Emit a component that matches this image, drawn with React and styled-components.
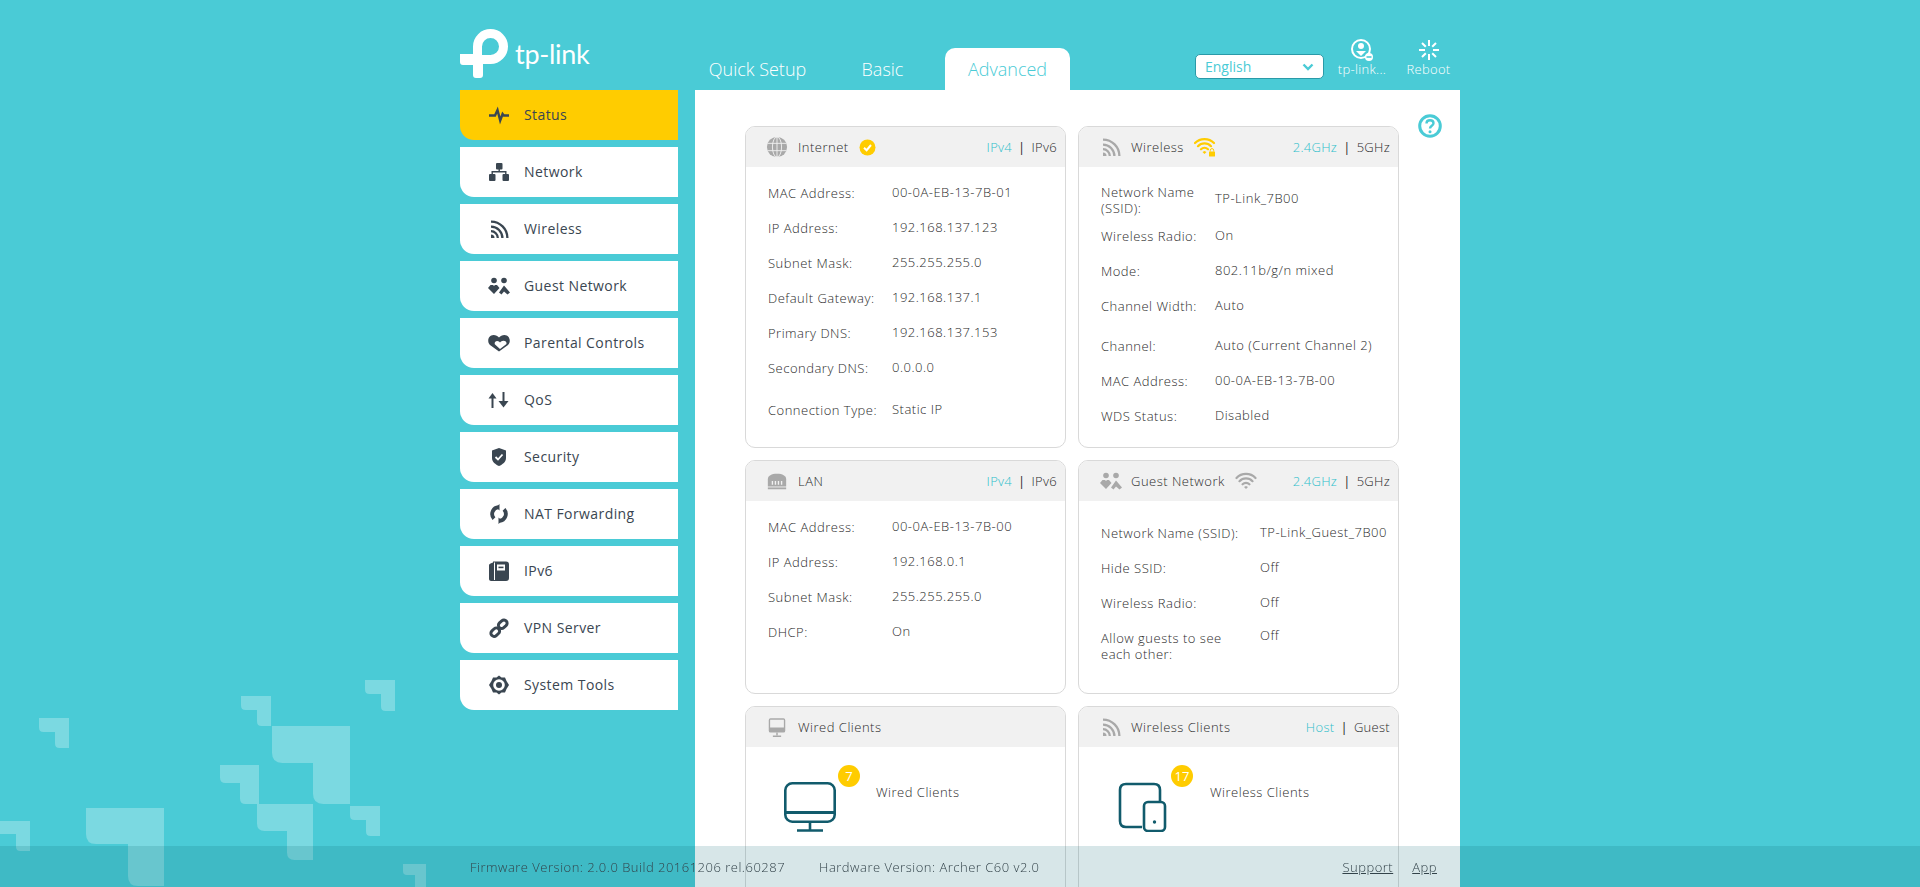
import React from "react";
import styled, {createGlobalStyle} from "styled-components";

const TEAL = "#4acbd6";
const DARK = "#3a4651";
const GRAY = "#a9a9a9";
const YELLOW = "#ffcc00";
const DEEP = "#115b6c";

const Global = createGlobalStyle`
  html, body { margin: 0; height: 100%; overflow: hidden; background: ${TEAL}; }
  body { font-family: "Open Sans", "Liberation Sans", sans-serif; font-size: 13px; font-weight: 300; letter-spacing: 0.5px; color: #2b2b2b; }
  * { box-sizing: border-box; }
`;

const Decor = styled.svg`
  position: fixed;
  left: 0;
  bottom: 0;
  width: 460px;
  height: 210px;
  fill: rgba(255, 255, 255, 0.27);
`;

const Page = styled.div`
  position: relative;
  width: 1000px;
  height: 100vh;
  margin: 0 auto;
  display: flex;
  flex-direction: column;
  overflow: hidden;
`;

const Header = styled.header`
  flex: none;
  height: 90px;
  display: flex;
  align-items: flex-end;
`;

const Logo = styled.div`
  width: 235px;
  height: 61px;
  display: flex;
  align-items: flex-start;
  color: #fff;
`;

const LogoText = styled.span`
  font-family: Lato, "Open Sans", sans-serif;
  font-size: 27px;
  font-weight: 400;
  line-height: 30px;
  margin: 10px 0 0 5px;
  letter-spacing: -0.3px;
`;

const Tabs = styled.nav`
  display: flex;
`;

const Tab = styled.div`
  width: 125px;
  height: 42px;
  line-height: 42px;
  text-align: center;
  font-size: 18px;
  font-weight: 300;
  letter-spacing: 0;
  color: ${p => (p.$active ? TEAL : "#fff")};
  background: ${p => (p.$active ? "#fff" : "transparent")};
  border-radius: 10px 10px 0 0;
`;

const Tools = styled.div`
  margin-left: auto;
  height: 90px;
  display: flex;
  position: relative;
`;

const LangSelect = styled.div`
  width: 129px;
  height: 25px;
  margin: 54px 13px 0 0;
  padding: 0 9px;
  display: flex;
  align-items: center;
  justify-content: space-between;
  background: #fff;
  border: 1px solid #2a9aa8;
  border-radius: 5px;
  color: ${TEAL};
  font-size: 14px;
  font-weight: 400;
  letter-spacing: 0;
`;

const ToolButton = styled.div`
  width: ${p => p.$w}px;
  margin-left: ${p => p.$ml || 0}px;
  padding-top: 38px;
  display: flex;
  flex-direction: column;
  align-items: center;
  color: #fff;
  font-size: 13px;
  font-weight: 300;
  letter-spacing: 0.3px;
  line-height: 16px;
  white-space: nowrap;
  svg { margin-bottom: -1px; }
`;

const Body = styled.div`
  flex: 1;
  min-height: 0;
  display: flex;
  gap: 17px;
`;

const Sidebar = styled.aside`
  flex: none;
  width: 218px;
  display: flex;
  flex-direction: column;
  gap: 7px;
`;

const MenuItem = styled.div`
  height: 50px;
  padding: 0 0 1px 27px;
  display: flex;
  align-items: center;
  gap: 13px;
  font-size: 14px;
  font-weight: 400;
  letter-spacing: 0.42px;
  color: ${DARK};
  background: ${p => (p.$active ? YELLOW : "#fff")};
  border-radius: 0 0 0 14px;
`;

const Main = styled.main`
  position: relative;
  flex: 1;
  padding: 36px 0 0 50px;
  background: #fff;
  overflow: hidden;
`;

const HelpIcon = styled.svg`
  position: absolute;
  right: 18px;
  top: 24px;
`;

const Grid = styled.div`
  display: grid;
  grid-template-columns: 321px 321px;
  grid-template-rows: 322px 234px 200px;
  column-gap: 12px;
  row-gap: 12px;
`;

const Card = styled.section`
  border: 1px solid #d9d9d9;
  border-radius: 10px;
  overflow: hidden;
`;

const CardHead = styled.div`
  height: 40px;
  padding: 0 8px 0 20px;
  display: flex;
  align-items: center;
  background: #f1f1f1;
  font-size: 13px;
`;

const HeadIcon = styled.span`
  display: flex;
  width: 32px;
  color: ${GRAY};
`;

const StateIcon = styled.span`
  display: flex;
  margin-left: 10px;
`;

const Switcher = styled.div`
  margin-left: auto;
  display: flex;
  gap: 6px;
  letter-spacing: 0.3px;
  span:first-child { color: #2fbfcb; }
`;

const Divider = styled.span`
  font-weight: 400;
`;

const CardBody = styled.div`
  padding: ${p => p.$top}px 0 0 22px;
`;

const Row = styled.div`
  display: flex;
  align-items: ${p => (p.$wrap ? "flex-start" : "center")};
  min-height: ${p => p.$h || 35}px;
  margin-top: ${p => p.$mt || 0}px;
  padding-top: ${p => (p.$wrap ? 9 : 0)}px;
`;

const Label = styled.div`
  flex: none;
  width: ${p => p.$w}px;
  line-height: 16px;
  padding-right: 4px;
  padding-top: 1px;
`;

const Value = styled.div`
  line-height: 16px;
  margin-top: -2px;
  white-space: nowrap;
`;

const Clients = styled.div`
  display: flex;
  align-items: flex-start;
  padding: 35px 0 0 ${p => p.$left}px;
  position: relative;
`;

const ClientsIcon = styled.div`
  position: relative;
  flex: none;
  width: 52px;
  height: 50px;
  margin-right: ${p => p.$gap}px;
  color: ${DEEP};
`;

const Badge = styled.span`
  position: absolute;
  left: ${p => p.$x}px;
  top: -17px;
  width: 22px;
  height: 22px;
  border-radius: 50%;
  background: ${YELLOW};
  color: #fff;
  font-size: 13px;
  font-weight: 400;
  letter-spacing: 0;
  line-height: 22px;
  text-align: center;
`;

const ClientsLabel = styled.div`
  line-height: 18px;
  margin-top: 1px;
`;

const Footer = styled.footer`
  position: fixed;
  left: 0;
  right: 0;
  bottom: 0;
  height: 41px;
  background: rgba(5, 100, 112, 0.16);
  color: #33434a;
  font-size: 13px;
`;

const FooterInner = styled.div`
  width: 1000px;
  height: 100%;
  margin: 0 auto;
  padding: 0 23px 0 10px;
  display: flex;
  align-items: center;
`;

const Version = styled.span`
  margin-right: 34px;
`;

const FooterLinks = styled.div`
  margin-left: auto;
  display: flex;
  gap: 19px;
`;

const FooterLink = styled.a`
  color: #33434a;
  text-decoration: underline;
`;

// decorative corner pieces of the page background: x1, y1, x2, y2, horizontal arm, vertical arm
const CORNERS = [
  [-4, 144, 30, 174, 13, 14],
  [39, 41, 69, 71, 14, 14],
  [241, 19, 271, 49, 14, 14],
  [365, 3, 395, 34, 14, 14],
  [272, 49, 350, 127, 37, 37],
  [220, 88, 259, 127, 18, 19],
  [257, 127, 313, 183, 27, 26],
  [350, 129, 380, 159, 14, 14],
  [86, 131, 164, 209, 36, 36],
  [403, 187, 426, 225, 11, 11],
];

const cornerPath = ([x1, y1, x2, y2, a, b]) => {
  const r = Math.min(a, b) / 4 + 1;
  return `M${x1} ${y1}H${x2}V${y2}H${x2 - b + r}Q${x2 - b} ${y2} ${x2 - b} ${y2 - r}V${y1 + a}H${x1 + r}Q${x1} ${y1 + a} ${x1} ${y1 + a - r}Z`;
};

const Svg = ({size = 24, children}) => (
  <svg width={size} height={size} viewBox="0 0 24 24" fill="currentColor">{children}</svg>
);

const IconStatus = () => <Svg><path d="M2 12.5H8L10.5 7L13.2 17.5L15.6 11L16.8 12.5H22" fill="none" stroke="currentColor" strokeWidth="2.4" /></Svg>;
const IconNetwork = () => (
  <Svg>
    <rect x="9" y="3" width="6.5" height="6.5" rx="1" />
    <rect x="2" y="14" width="6.5" height="7" rx="1" />
    <rect x="15.5" y="14" width="6.5" height="7" rx="1" />
    <path d="M12.2 9V12M5.2 14V11.8H18.8V14" fill="none" stroke="currentColor" strokeWidth="1.4" />
  </Svg>
);
const IconWifiRss = () => (
  <Svg>
    <path d="M4 4.6A16.4 16.4 0 0 1 20.4 21M4 9.6A11.4 11.4 0 0 1 15.4 21M4 14.2A6.8 6.8 0 0 1 10.8 21" fill="none" stroke="currentColor" strokeWidth="2.3" />
    <path d="M4 17.5A3.5 3.5 0 0 1 7.5 21H4Z" />
  </Svg>
);
const IconGuest = () => (
  <Svg>
    <circle cx="7" cy="6.5" r="2.8" />
    <circle cx="17" cy="6.5" r="2.8" />
    <path d="M1 14L3.5 11H6L7 12L8 11H10L12.5 14L7 20Z" />
    <path d="M12 18.5L17 11.5L23 18.5L20.5 20.5L17 17.5L14.5 20.5Z" />
  </Svg>
);
const IconParental = () => (
  <Svg>
    <path d="M12 20.5L3 14C-0.5 10.5 1.5 4 6.5 4C9 4 10.5 5 12 6.5C13.5 5 15 4 17.5 4C22.5 4 24.5 10.5 21 14Z" />
    <path d="M13 18L7.8 13.2C7 11 9.5 9 12 10.5L13 11.5L14 10.5C16.5 9 20 10 19.5 13Z" fill="#fff" />
  </Svg>
);
const IconQos = () => (
  <Svg>
    <path d="M5.5 10V20" stroke="currentColor" strokeWidth="2" />
    <path d="M1.5 10.5L5.5 5L9.5 10.5Z" />
    <path d="M16.5 4V14" stroke="currentColor" strokeWidth="2" />
    <path d="M11.5 13L16.5 19.5L21.5 13Z" />
  </Svg>
);
const IconShield = () => (
  <Svg>
    <path d="M12 3L19 5.5V13C19 17 15.5 19.5 12 21C8.5 19.5 5 17 5 13V5.5Z" />
    <path d="M8.5 12L11 14.5L15.5 9.5" fill="none" stroke="#fff" strokeWidth="1.8" />
  </Svg>
);
const IconNat = () => (
  <Svg>
    <path d="M11.5 5.2A6.8 6.8 0 0 0 7 16.6M12.5 18.8A6.8 6.8 0 0 0 17 7.4" fill="none" stroke="currentColor" strokeWidth="3.8" />
    <path d="M12.5 2V8.5L9 5.2ZM11.5 22V15.5L15 18.8Z" />
  </Svg>
);
const IconDoc = () => (
  <Svg>
    <path d="M6 2.5H19C21 2.5 22 3.5 22 5.5V19C22 21 21 22 19 22H4C3 22 2 21 2 20V6.5C2 5.5 2.5 5 3.5 4.5L6 3.5Z" />
    <path d="M7.5 3.5V21" stroke="#fff" strokeWidth="1" />
    <rect x="10" y="5.5" width="8" height="6" fill="#fff" />
    <rect x="11.5" y="7.6" width="5" height="1.6" />
  </Svg>
);
const IconLink = () => (
  <Svg>
    <g fill="none" stroke="currentColor" strokeWidth="3">
      <rect x="3.5" y="13" width="9.5" height="6.4" rx="3.2" transform="rotate(-42 8.2 16.2)" />
      <rect x="11" y="5" width="9.5" height="6.4" rx="3.2" transform="rotate(-42 15.8 8.2)" />
    </g>
  </Svg>
);
const IconGear = () => (
  <Svg>
    <path d="M12 2.5L14.5 4.6L18 4.5L19.5 8L22 12L19.5 16L18 19.5L14.5 19.4L12 21.5L9.5 19.4L6 19.5L4.5 16L2 12L4.5 8L6 4.5L9.5 4.6Z" />
    <circle cx="12" cy="12" r="5.8" fill="#fff" />
    <circle cx="12" cy="12" r="3" />
  </Svg>
);
const IconGlobe = () => (
  <Svg size={22}>
    <circle cx="12" cy="12" r="11" />
    <g fill="none" stroke="#f1f1f1" strokeWidth="1">
      <ellipse cx="12" cy="12" rx="5" ry="11" />
      <path d="M12 1V23M1.5 8H22.5M1.5 16H22.5" />
    </g>
  </Svg>
);
const IconLan = () => (
  <Svg size={22}>
    <path d="M2 18V10C2 6 6 4 12 4C18 4 22 6 22 10V18Z" />
    <path d="M7 12V16M10.3 12V16M13.6 12V16M17 12V16" stroke="#f1f1f1" strokeWidth="1.5" />
    <rect x="2" y="19" width="20" height="2" />
  </Svg>
);
const IconMonitorSmall = () => (
  <Svg size={22}>
    <path d="M5 2.5H19A2 2 0 0 1 21 4.5V16A2 2 0 0 1 19 18H5A2 2 0 0 1 3 16V4.5A2 2 0 0 1 5 2.5ZM4.5 4V12.5H19.5V4Z" fillRule="evenodd" />
    <path d="M12 18V21M7.5 22H16.5" stroke="currentColor" strokeWidth="1.6" fill="none" />
  </Svg>
);
const IconWifi = ({color}) => (
  <svg width="22" height="20" viewBox="0 0 22 20" fill="none" stroke={color} strokeWidth="2.2" strokeLinecap="round">
    <path d="M1.5 7C6.5 1.5 15.5 1.5 20.5 7M4.5 10.2C8 6.5 14 6.5 17.5 10.2M7.6 13.3C9.5 11.4 12.5 11.4 14.4 13.3" />
    <path d="M9 16L11 18L13 16L11 15Z" fill={color} stroke="none" />
  </svg>
);
const IconWifiLock = () => (
  <svg width="22" height="20" viewBox="0 0 22 20" fill="none">
    <path d="M1 6C6 0.8 15 0.8 20 6M4 9.2C7.5 5.5 13.5 5.5 17 9.2M7 12.3C9 10.4 12 10.4 14 12.3" stroke={YELLOW} strokeWidth="2.2" strokeLinecap="round" />
    <path d="M8.5 15L10.5 17L12.5 15L10.5 14Z" fill={YELLOW} />
    <rect x="15" y="14.5" width="6" height="5" rx="0.6" fill={YELLOW} />
    <path d="M16.3 14.5V13.3A1.7 1.7 0 0 1 19.7 13.3V14.5" stroke={YELLOW} strokeWidth="1" />
  </svg>
);
const IconCheckBadge = () => (
  <svg width="17" height="17" viewBox="0 0 17 17">
    <circle cx="8.5" cy="8.5" r="8" fill={YELLOW} />
    <path d="M5 8.8L7.6 11.2L12 6" fill="none" stroke="#fff" strokeWidth="2" />
  </svg>
);
const IconMonitorBig = () => (
  <svg width="52" height="50" viewBox="0 0 52 50" fill="none" stroke="currentColor" strokeWidth="2.6">
    <rect x="1.3" y="1.3" width="49.4" height="38.4" rx="7" />
    <path d="M1.3 30.5H50.7" strokeWidth="3" />
    <path d="M26 40V48M13 48.5H39" />
  </svg>
);
const IconTablet = () => (
  <svg width="52" height="50" viewBox="0 0 52 50" fill="none" stroke="currentColor" strokeWidth="2.6">
    <path d="M25 45H9C5 45 3 43 3 39V8C3 4 5 2 9 2H37C41 2 43 4 43 8V20" />
    <rect x="27" y="20" width="21" height="29" rx="4" />
    <circle cx="37.5" cy="40" r="1.7" fill="currentColor" stroke="none" />
  </svg>
);

const MENU = [
  ["Status", IconStatus],
  ["Network", IconNetwork],
  ["Wireless", IconWifiRss],
  ["Guest Network", IconGuest],
  ["Parental Controls", IconParental],
  ["QoS", IconQos],
  ["Security", IconShield],
  ["NAT Forwarding", IconNat],
  ["IPv6", IconDoc],
  ["VPN Server", IconLink],
  ["System Tools", IconGear],
];

const INTERNET = [
  ["MAC Address:", "00-0A-EB-13-7B-01"],
  ["IP Address:", "192.168.137.123"],
  ["Subnet Mask:", "255.255.255.0"],
  ["Default Gateway:", "192.168.137.1"],
  ["Primary DNS:", "192.168.137.153"],
  ["Secondary DNS:", "0.0.0.0"],
  ["Connection Type:", "Static IP", {$mt: 7}],
];

const WIRELESS = [
  [<>Network Name<br />(SSID):</>, "TP-Link_7B00", {$h: 38}],
  ["Wireless Radio:", "On"],
  ["Mode:", "802.11b/g/n mixed"],
  ["Channel Width:", "Auto"],
  ["Channel:", "Auto (Current Channel 2)", {$mt: 5}],
  ["MAC Address:", "00-0A-EB-13-7B-00"],
  ["WDS Status:", "Disabled"],
];

const LAN = [
  ["MAC Address:", "00-0A-EB-13-7B-00"],
  ["IP Address:", "192.168.0.1"],
  ["Subnet Mask:", "255.255.255.0"],
  ["DHCP:", "On"],
];

const GUEST = [
  ["Network Name (SSID):", "TP-Link_Guest_7B00"],
  ["Hide SSID:", "Off"],
  ["Wireless Radio:", "Off"],
  [<>Allow guests to see<br />each other:</>, "Off", {$wrap: true}],
];

const Info = ({rows, labelWidth, top}) => (
  <CardBody $top={top}>
    {rows.map(([label, value, opts], i) => (
      <Row key={i} {...opts}>
        <Label $w={labelWidth}>{label}</Label>
        <Value>{value}</Value>
      </Row>
    ))}
  </CardBody>
);

const Head = ({icon, title, state, links}) => (
  <CardHead>
    <HeadIcon>{icon}</HeadIcon>
    {title}
    {state && <StateIcon>{state}</StateIcon>}
    {links && (
      <Switcher>
        <span>{links[0]}</span>
        <Divider>|</Divider>
        <span>{links[1]}</span>
      </Switcher>
    )}
  </CardHead>
);

const App = () => (
  <>
    <Global />
    <Decor viewBox="0 0 460 210">
      {CORNERS.map((c, i) => <path key={i} d={cornerPath(c)} />)}
    </Decor>
    <Page>
      <Header>
        <Logo>
          <svg width="50" height="50" viewBox="0 0 50 50" fill="currentColor" style={{flex: "none"}}>
            <path fillRule="evenodd" d="M13 25V17.5A17.5 17.5 0 1 1 30.5 35H23V46Q23 49 20 49H16Q13 49 13 46V36H3Q0 36 0 33V25ZM22 26H30.5A8.5 8.5 0 1 0 22 17.5Z" />
          </svg>
          <LogoText>tp-link</LogoText>
        </Logo>
        <Tabs>
          <Tab>Quick Setup</Tab>
          <Tab>Basic</Tab>
          <Tab $active>Advanced</Tab>
        </Tabs>
        <Tools>
          <LangSelect>
            English
            <svg width="12" height="8" viewBox="0 0 12 8" fill="none" stroke={TEAL} strokeWidth="2.4"><path d="M1.5 1.5L6 6L10.5 1.5" /></svg>
          </LangSelect>
          <ToolButton $w={50}>
            <svg width="24" height="24" viewBox="0 0 24 24">
              <circle cx="11" cy="11" r="9" fill="none" stroke="#fff" strokeWidth="2" />
              <circle cx="11" cy="8" r="3" fill="#fff" />
              <path d="M6 13H16L11 18Z" fill="#fff" />
              <circle cx="19" cy="19" r="4" fill="#fff" />
              <rect x="16.5" y="18.2" width="5" height="1.6" fill={TEAL} />
            </svg>
            tp-link...
          </ToolButton>
          <ToolButton $w={45} $ml={19}>
            <svg width="24" height="24" viewBox="0 0 24 24" fill="none" stroke="#fff" strokeWidth="2">
              <path d="M12 2V8M12 16V22M2 12H8M16 12H22M5 5L8.8 8.8M15.2 15.2L19 19M19 5L15.2 8.8M8.8 15.2L5 19" />
            </svg>
            Reboot
          </ToolButton>
          <div style={{width: 9}} />
        </Tools>
      </Header>
      <Body>
        <Sidebar>
          {MENU.map(([name, Icon], i) => (
            <MenuItem key={name} $active={i === 0}><Icon />{name}</MenuItem>
          ))}
        </Sidebar>
        <Main>
          <HelpIcon width="24" height="24" viewBox="0 0 24 24" fill="none" stroke={TEAL}>
            <circle cx="12" cy="12" r="10.3" strokeWidth="3" />
            <path d="M8.5 9.5C8.5 7.3 10 6.3 12 6.3C14 6.3 15.5 7.5 15.5 9.2C15.5 11.8 12 11.8 12 14.5" strokeWidth="2.4" />
            <circle cx="12" cy="17.8" r="1.5" fill={TEAL} stroke="none" />
          </HelpIcon>
          <Grid>
            <Card>
              <Head icon={<IconGlobe />} title="Internet" state={<IconCheckBadge />} links={["IPv4", "IPv6"]} />
              <Info rows={INTERNET} labelWidth={124} top={8} />
            </Card>
            <Card>
              <Head icon={<IconWifiRss />} title="Wireless" state={<IconWifiLock />} links={["2.4GHz", "5GHz"]} />
              <Info rows={WIRELESS} labelWidth={114} top={13} />
            </Card>
            <Card>
              <Head icon={<IconLan />} title="LAN" links={["IPv4", "IPv6"]} />
              <Info rows={LAN} labelWidth={124} top={8} />
            </Card>
            <Card>
              <Head icon={<IconGuest />} title="Guest Network" state={<IconWifi color={GRAY} />} links={["2.4GHz", "5GHz"]} />
              <Info rows={GUEST} labelWidth={159} top={14} />
            </Card>
            <Card>
              <Head icon={<IconMonitorSmall />} title="Wired Clients" />
              <Clients $left={38}>
                <ClientsIcon $gap={40}>
                  <IconMonitorBig />
                  <Badge $x={54}>7</Badge>
                </ClientsIcon>
                <ClientsLabel>Wired Clients</ClientsLabel>
              </Clients>
            </Card>
            <Card>
              <Head icon={<IconWifiRss />} title="Wireless Clients" links={["Host", "Guest"]} />
              <Clients $left={38}>
                <ClientsIcon $gap={41}>
                  <IconTablet />
                  <Badge $x={54}>17</Badge>
                </ClientsIcon>
                <ClientsLabel>Wireless Clients</ClientsLabel>
              </Clients>
            </Card>
          </Grid>
        </Main>
      </Body>
    </Page>
    <Footer>
      <FooterInner>
        <Version>Firmware Version: 2.0.0 Build 20161206 rel.60287</Version>
        <Version>Hardware Version: Archer C60 v2.0</Version>
        <FooterLinks>
          <FooterLink href="#">Support</FooterLink>
          <FooterLink href="#">App</FooterLink>
        </FooterLinks>
      </FooterInner>
    </Footer>
  </>
);

export default App;
